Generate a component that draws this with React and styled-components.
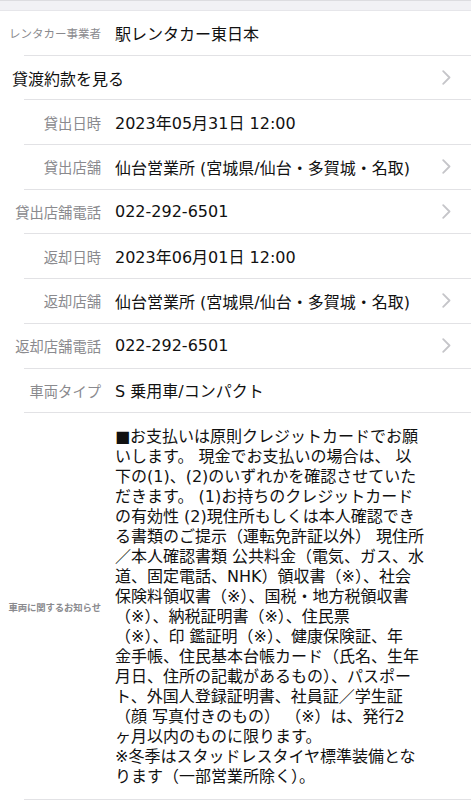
import React from 'react'
import styled, { createGlobalStyle } from 'styled-components'

const GlobalStyle = createGlobalStyle`
	html, body {
		margin: 0;
		padding: 0;
		background: #ffffff;
	}
	body {
		font-family: "Noto Sans CJK JP", "Noto Sans", sans-serif;
		color: #111111;
		-webkit-font-smoothing: antialiased;
	}
`

// digits in the reference are wide, DejaVu gives close widths, CJK falls through to Noto
const valueFont = `"DejaVu Sans", "Noto Sans CJK JP", sans-serif`

const rows = [
	{ label: 'レンタカー事業者', value: '駅レンタカー東日本', small: true },
	{ title: '貸渡約款を見る', link: true },
	{ label: '貸出日時', value: '2023年05月31日 12:00' },
	{ label: '貸出店舗', value: '仙台営業所 (宮城県/仙台・多賀城・名取)', link: true },
	{ label: '貸出店舗電話', value: '022-292-6501', link: true },
	{ label: '返却日時', value: '2023年06月01日 12:00' },
	{ label: '返却店舗', value: '仙台営業所 (宮城県/仙台・多賀城・名取)', link: true },
	{ label: '返却店舗電話', value: '022-292-6501', link: true },
	{ label: '車両タイプ', value: 'S 乗用車/コンパクト' },
]

const noticeLines = [
	'■お支払いは原則クレジットカードでお願',
	'いします。 現金でお支払いの場合は、 以',
	'下の(1)、(2)のいずれかを確認させていた',
	'だきます。 (1)お持ちのクレジットカード',
	'の有効性 (2)現住所もしくは本人確認でき',
	'る書類のご提示（運転免許証以外） 現住所',
	'／本人確認書類 公共料金（電気、ガス、水',
	'道、固定電話、NHK）領収書（※）、社会',
	'保険料領収書（※）、国税・地方税領収書',
	'（※）、納税証明書（※）、住民票',
	'（※）、印 鑑証明（※）、健康保険証、年',
	'金手帳、住民基本台帳カード（氏名、生年',
	'月日、住所の記載があるもの）、パスポー',
	'ト、外国人登録証明書、社員証／学生証',
	'（顔 写真付きのもの） （※）は、発行2',
	'ヶ月以内のものに限ります。',
	'※冬季はスタッドレスタイヤ標準装備とな',
	'ります（一部営業所除く）。',
]

const Chevron = () => (
	<ChevronWrap>
		<svg width="9" height="15" viewBox="0 0 9 15">
			<polyline points="1.2,1.2 7.5,7.5 1.2,13.8" fill="none" stroke="#c5c5c9" strokeWidth="1.8" strokeLinecap="round" strokeLinejoin="round" />
		</svg>
	</ChevronWrap>
)

const App = () => {
	return (
		<Page>
			<GlobalStyle />
			<TopStrip />
			{rows.map((row, i) => (
				<React.Fragment key={i}>
					<Row>
						{row.title ? (
							<Title>{row.title}</Title>
						) : (
							<>
								<Label small={row.small}>{row.label}</Label>
								<Value>{row.value}</Value>
							</>
						)}
						{row.link && <Chevron />}
					</Row>
					<Divider />
				</React.Fragment>
			))}
			<NoticeRow>
				<Label tiny>車両に関するお知らせ</Label>
				<NoticeText>
					{noticeLines.map((line, i) => (
						<NoticeLine key={i}>{line}</NoticeLine>
					))}
				</NoticeText>
			</NoticeRow>
			<Divider />
		</Page>
	)
}

export default App

const Page = styled.div`
	width: 471px;
	min-height: 800px;
	background: #ffffff;
	overflow: hidden;
`

const TopStrip = styled.div`
	box-sizing: border-box;
	height: 11px;
	background: #f1f1f5;
	border-top: 1px solid #dcdce0;
	border-bottom: 1px solid #e6e6ea;
`

const Row = styled.div`
	display: flex;
	align-items: center;
	height: 43.7px;
	padding-right: 20px;
`

const Divider = styled.div`
	height: 1px;
	margin-left: 24px;
	background: #e2e2e5;
`

const Label = styled.div`
	flex: none;
	box-sizing: border-box;
	width: 101px;
	margin-right: 14px;
	text-align: right;
	white-space: nowrap;
	color: #8a8a8e;
	font-size: ${props => (props.tiny ? '9.4px' : props.small ? '11.5px' : '14.3px')};
	font-weight: ${props => (props.tiny ? 700 : 400)};
	letter-spacing: ${props => (props.tiny ? '-0.1px' : '0')};
`

const Value = styled.div`
	flex: 1;
	font-family: ${valueFont};
	font-size: 16px;
	color: #111111;
	white-space: nowrap;
`

const Title = styled.div`
	flex: 1;
	padding-left: 12px;
	font-size: 16px;
	color: #111111;
`

const ChevronWrap = styled.div`
	flex: none;
	display: flex;
	align-items: center;
	width: 9px;
	height: 15px;
	margin-left: auto;
`

const NoticeRow = styled.div`
	display: flex;
	align-items: center;
	padding: 14px 0 12px;
`

const NoticeText = styled.div`
	flex: 1;
	font-family: ${valueFont};
	font-size: 16px;
	line-height: 20px;
	color: #111111;
`

const NoticeLine = styled.div`
	white-space: nowrap;
`
